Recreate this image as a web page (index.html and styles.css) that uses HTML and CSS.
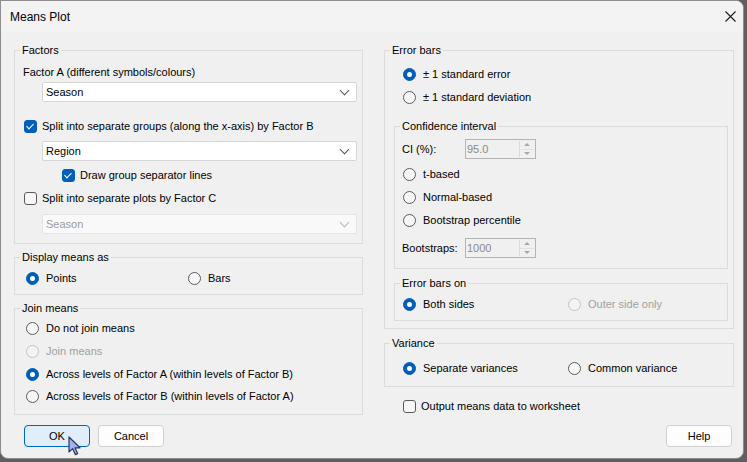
FILE: index.html
```html
<!DOCTYPE html>
<html lang="en">
<head>
    <meta charset="UTF-8">
    <title>Means Plot</title>
    <link rel="stylesheet" href="styles.css">
</head>
<body>
    <div class="window">
        <div class="titlebar">
            <span class="title">Means Plot</span>
            <svg class="close" width="11" height="11" viewBox="0 0 11 11"><path d="M0.5 0.5 L10.5 10.5 M10.5 0.5 L0.5 10.5" stroke="#1a1a1a" stroke-width="1.1" fill="none"/></svg>
        </div>

        <div class="content">
            <div class="col col-left">
                <fieldset class="group factors">
                    <legend>Factors</legend>
                    <div class="group-body">
                        <div class="label-line">Factor A (different symbols/colours)</div>
                        <div class="select first-select"><span>Season</span><span class="chev"></span></div>
                        <div class="row split-b"><span class="check on"></span>Split into separate groups (along the x-axis) by Factor B</div>
                        <div class="select region-select"><span>Region</span><span class="chev"></span></div>
                        <div class="row draw-lines"><span class="check on"></span>Draw group separator lines</div>
                        <div class="row split-c"><span class="check"></span>Split into separate plots by Factor C</div>
                        <div class="select disabled last-select"><span>Season</span><span class="chev"></span></div>
                    </div>
                </fieldset>

                <fieldset class="group display">
                    <legend>Display means as</legend>
                    <div class="group-body">
                        <div class="row pair">
                            <span class="opt opt-wide"><span class="radio on"></span>Points</span>
                            <span class="opt"><span class="radio"></span>Bars</span>
                        </div>
                    </div>
                </fieldset>

                <fieldset class="group join">
                    <legend>Join means</legend>
                    <div class="group-body">
                        <div class="row"><span class="radio"></span>Do not join means</div>
                        <div class="row off"><span class="radio"></span>Join means</div>
                        <div class="row"><span class="radio on"></span>Across levels of Factor A (within levels of Factor B)</div>
                        <div class="row tight"><span class="radio"></span>Across levels of Factor B (within levels of Factor A)</div>
                    </div>
                </fieldset>

                <div class="buttons">
                    <button class="btn focus">OK</button>
                    <button class="btn">Cancel</button>
                </div>
            </div>

            <div class="col col-right">
                <fieldset class="group errbars">
                    <legend>Error bars</legend>
                    <div class="group-body">
                        <div class="row first"><span class="radio on"></span>± 1 standard error</div>
                        <div class="row"><span class="radio"></span>± 1 standard deviation</div>

                        <fieldset class="group ci">
                            <legend>Confidence interval</legend>
                            <div class="group-body">
                                <div class="field-row ci-row">
                                    <span class="field-label">CI (%):</span>
                                    <span class="spin"><span class="spin-val">95.0</span><span class="spin-btns"><span class="up"></span><span class="down"></span></span></span>
                                </div>
                                <div class="row"><span class="radio"></span>t-based</div>
                                <div class="row"><span class="radio"></span>Normal-based</div>
                                <div class="row"><span class="radio"></span>Bootstrap percentile</div>
                                <div class="field-row boot-row">
                                    <span class="field-label">Bootstraps:</span>
                                    <span class="spin"><span class="spin-val">1000</span><span class="spin-btns"><span class="up"></span><span class="down"></span></span></span>
                                </div>
                            </div>
                        </fieldset>

                        <fieldset class="group sides">
                            <legend>Error bars on</legend>
                            <div class="group-body">
                                <div class="row pair">
                                    <span class="opt opt-wide2"><span class="radio on"></span>Both sides</span>
                                    <span class="opt off"><span class="radio"></span>Outer side only</span>
                                </div>
                            </div>
                        </fieldset>
                    </div>
                </fieldset>

                <fieldset class="group variance">
                    <legend>Variance</legend>
                    <div class="group-body">
                        <div class="row pair">
                            <span class="opt opt-wide2"><span class="radio on"></span>Separate variances</span>
                            <span class="opt"><span class="radio"></span>Common variance</span>
                        </div>
                    </div>
                </fieldset>

                <div class="row output"><span class="check"></span>Output means data to worksheet</div>

                <div class="help-line">
                    <button class="btn">Help</button>
                </div>
            </div>
        </div>

        <svg class="cursor" width="14" height="20" viewBox="0 0 14 20"><path d="M1 1 L1 16 L4.6 12.6 L7.3 18.6 L9.6 17.6 L7 11.8 L12 11.8 Z" fill="#a4b2ef" stroke="#2b3563" stroke-width="1.2" stroke-linejoin="round"/></svg>
    </div>
</body>
</html>
```

FILE: styles.css
```css
body {
    margin: 0;
    background-color: #5f5f5f;
    font-family: "Liberation Sans", Arial, sans-serif;
    font-size: 11px;
    color: #000;
}
.window {
    position: relative;
    width: 742px;
    height: 457px;
    background-color: #f0f0f0;
    border: 1px solid #8e8e8e;
    border-radius: 0 8px 8px 8px;
    overflow: hidden;
}
.titlebar {
    height: 31px;
    background-color: #f3f3f3;
    display: flex;
    align-items: center;
    justify-content: space-between;
    padding-left: 9px;
    font-size: 12px;
}
.close {
    margin-right: 7px;
}
.content {
    display: flex;
    padding: 10px 0 0 13px;
}
.col-left {
    width: 349px;
}
.col-right {
    width: 350px;
    margin-left: 21px;
}

/* group boxes */
.group {
    margin: 0;
    padding: 0;
    min-width: 0;
    border: 1px solid #dcdcdc;
}
.group legend {
    padding: 0 2px;
    margin-left: 5px;
    line-height: 16px;
}
.row {
    display: flex;
    align-items: center;
    height: 16px;
    white-space: nowrap;
}
.off {
    color: #a0a0a0;
}
.opt {
    display: flex;
    align-items: center;
}

/* checkboxes + radios */
.check {
    width: 11px;
    height: 11px;
    border: 1px solid #5c5c5c;
    border-radius: 3px;
    background-color: #f7f7f7;
    margin-right: 5px;
    flex-shrink: 0;
    position: relative;
}
.check.on {
    background-color: #005fb8;
    border-color: #005fb8;
}
.check.on::after {
    content: "";
    position: absolute;
    left: 3px;
    top: 1px;
    width: 3px;
    height: 6px;
    border-right: 1.2px solid #fff;
    border-bottom: 1.2px solid #fff;
    transform: rotate(45deg);
}
.radio {
    width: 11px;
    height: 11px;
    border: 1px solid #5c5c5c;
    border-radius: 50%;
    background-color: #f7f7f7;
    margin-right: 7px;
    flex-shrink: 0;
    position: relative;
}
.radio.on {
    background-color: #005fb8;
    border-color: #005fb8;
}
.radio.on::after {
    content: "";
    position: absolute;
    left: 3px;
    top: 3px;
    width: 5px;
    height: 5px;
    border-radius: 50%;
    background-color: #fff;
}
.off .radio {
    border-color: #c4c4c4;
    background-color: #f3f3f3;
}

/* dropdowns */
.select {
    box-sizing: border-box;
    display: flex;
    align-items: center;
    justify-content: space-between;
    height: 20px;
    width: 315px;
    margin-left: 18px;
    padding-left: 3px;
    background-color: #fff;
    border: 1px solid #d6d6d6;
    border-radius: 2px;
}
.select.disabled {
    background-color: #f9f9f9;
    border-color: #e3e3e3;
    color: #9c9c9c;
}
.chev {
    width: 6px;
    height: 6px;
    margin: 0 8px 4px 0;
    border-right: 1px solid #555;
    border-bottom: 1px solid #555;
    transform: rotate(45deg);
}
.disabled .chev {
    border-color: #b8b8b8;
}

/* Factors */
.factors .group-body {
    padding: 0 4px 9px 9px;
}
.label-line {
    margin-top: 6px;
    margin-left: -1px;
    line-height: 16px;
}
.first-select {
    margin-top: 2px;
}
.split-b {
    margin-top: 16px;
}
.region-select {
    margin-top: 7px;
}
.draw-lines {
    margin-top: 6px;
    margin-left: 38px;
}
.split-c {
    margin-top: 7px;
}
.last-select {
    margin-top: 8px;
}

/* Display means as */
.display {
    margin-top: 5px;
}
.display .group-body {
    padding: 5px 4px 8px 11px;
}
.opt-wide {
    width: 162px;
}

/* Join means */
.join {
    margin-top: 5px;
}
.join .group-body {
    padding: 4px 4px 10px 11px;
}
.join .row + .row {
    margin-top: 7px;
}
.join .row.tight {
    margin-top: 6px;
}

/* buttons */
.buttons {
    display: flex;
    gap: 8px;
    margin: 10px 0 0 10px;
}
.btn {
    width: 66px;
    height: 22px;
    padding: 0;
    font-family: inherit;
    font-size: 11px;
    color: #000;
    background-color: #fdfdfd;
    border: 1px solid #d0d0d0;
    border-radius: 4px;
}
.btn.focus {
    background-color: #e0eef9;
    border-color: #0067c0;
}
.help-line {
    display: flex;
    justify-content: flex-end;
    margin: 11px 2px 0 0;
}

/* Error bars */
.errbars > .group-body {
    padding: 0 5px 7px 9px;
}
.errbars > .group-body > .row {
    margin-left: 9px;
    margin-top: 7px;
}
.errbars > .group-body > .row.first {
    margin-top: 8px;
}
.ci {
    margin-top: 13px;
}
.ci .group-body {
    padding: 5px 6px 10px 8px;
}
.field-row {
    display: flex;
    align-items: center;
    height: 20px;
}
.field-label {
    width: 63px;
    margin-left: -1px;
}
.ci .row {
    margin-top: 7px;
}
.boot-row {
    margin-top: 10px;
}
.spin {
    display: flex;
    width: 69px;
    height: 18px;
    border: 1px solid #b4b4b4;
    background-color: #f0f0f0;
    color: #8a8a8a;
}
.spin-val {
    flex: 1;
    padding-left: 1px;
    line-height: 18px;
}
.spin-btns {
    width: 14px;
    margin: 1px 1px 1px 0;
    border-left: 1px solid #dadada;
    display: flex;
    flex-direction: column;
}
.spin-btns span {
    flex: 1;
    display: flex;
    align-items: center;
    justify-content: center;
}
.spin-btns .up::before {
    content: "";
    border-left: 3px solid transparent;
    border-right: 3px solid transparent;
    border-bottom: 3px solid #a8a8a8;
}
.spin-btns .down {
    border-top: 1px solid #e2e2e2;
}
.spin-btns .down::before {
    content: "";
    border-left: 3px solid transparent;
    border-right: 3px solid transparent;
    border-top: 3px solid #a8a8a8;
}
.sides {
    margin-top: 6px;
}
.sides .group-body {
    padding: 5px 6px 8px 8px;
}
.opt-wide2 {
    width: 165px;
}

/* Variance */
.variance {
    margin-top: 6px;
}
.variance .group-body {
    padding: 9px 5px 10px 18px;
}
.output {
    margin: 11px 0 0 19px;
}

.cursor {
    position: absolute;
    left: 67px;
    top: 435px;
}
```
